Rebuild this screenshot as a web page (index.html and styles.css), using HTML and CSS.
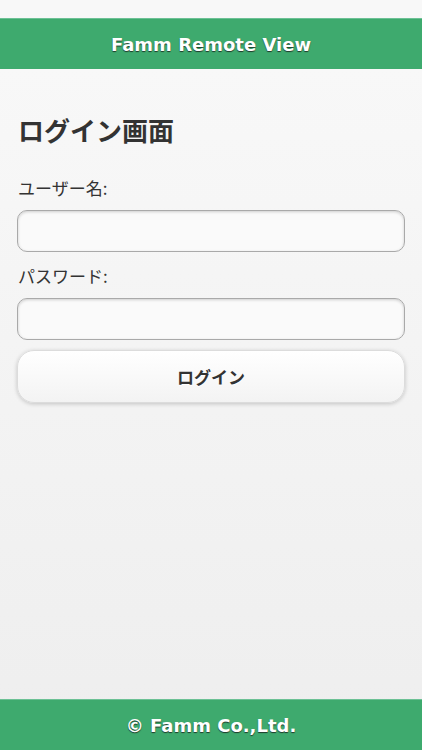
FILE: index.html
```html
<!DOCTYPE html>
<html lang="ja">
<head>
<meta charset="utf-8">
<title>Famm Remote View</title>
<link rel="stylesheet" href="styles.css">
</head>
<body>
<div class="page">
  <div class="statusbar"></div>
  <header class="header">Famm Remote View</header>
  <main class="content">
    <h2 class="title">ログイン画面</h2>
    <label class="label" for="user">ユーザー名:</label>
    <input class="field" id="user" type="text">
    <label class="label label-second" for="pass">パスワード:</label>
    <input class="field field-second" id="pass" type="password">
    <button class="btn" type="button">ログイン</button>
  </main>
  <footer class="footer">© Famm Co.,Ltd.</footer>
</div>
</body>
</html>
```
FILE: styles.css
```css
html, body {
  margin: 0;
  padding: 0;
}
body {
  font-family: "Noto Sans CJK JP", "Noto Sans", sans-serif;
  color: #333;
}
.page {
  min-height: 750px;
  height: 100vh;
  display: flex;
  flex-direction: column;
  background: linear-gradient(to bottom, #f9f9f9 0%, #eeeeee 100%);
}
.statusbar {
  height: 18px;
  background: #f8f8f8;
  flex: none;
}
.header, .footer {
  flex: none;
  height: 51px;
  box-sizing: border-box;
  background: #3eaa6e;
  border-top: 1px solid #6cc195;
  color: #fff;
  font-family: "DejaVu Sans", Verdana, sans-serif;
  font-weight: bold;
  font-size: 18px;
  display: flex;
  align-items: center;
  justify-content: center;
  text-shadow: 0 1px 1px #1f3a2a;
}
.content {
  flex: 1;
  display: flex;
  flex-direction: column;
  padding: 0 17px;
}
.title {
  margin: 43px 0 0 0;
  font-size: 26px;
  line-height: 36px;
  font-weight: bold;
  color: #333;
  padding-left: 1px;
}
.label {
  display: block;
  margin-top: 29px;
  font-size: 17px;
  line-height: 22px;
  color: #333;
  padding-left: 1px;
}
.label-second {
  margin-top: 13px;
}
.field {
  display: block;
  margin: 11px 0 0 0;
  height: 42px;
  box-sizing: border-box;
  border: 1px solid #a9a9a9;
  border-radius: 10px;
  background: #fafafa;
  box-shadow: inset 0 1px 3px rgba(0,0,0,0.18);
  font-size: 16px;
  padding: 0 10px;
  width: 100%;
}
.field-second {
  margin-top: 11px;
}
.btn {
  margin-top: 10px;
  height: 53px;
  width: 100%;
  box-sizing: border-box;
  border: 1px solid #dcdcdc;
  border-radius: 17px;
  background: linear-gradient(to bottom, #ffffff 0%, #f3f3f3 100%);
  box-shadow: 0 1px 4px rgba(0,0,0,0.2);
  font-family: "Noto Sans CJK JP", "Noto Sans", sans-serif;
  font-size: 17px;
  font-weight: bold;
  color: #333;
  text-shadow: 0 1px 0 #fff;
}
```
